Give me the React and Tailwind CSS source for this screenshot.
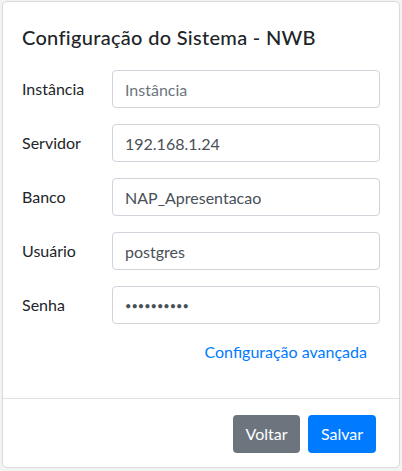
import { useState } from 'react';

const fields = [
  { id: 'instancia', label: 'Instância', value: '', placeholder: 'Instância' },
  { id: 'servidor', label: 'Servidor', value: '192.168.1.24' },
  { id: 'banco', label: 'Banco', value: 'NAP_Apresentacao' },
  { id: 'usuario', label: 'Usuário', value: 'postgres' },
  { id: 'senha', label: 'Senha', value: 'nwb1234567', type: 'password' },
];

export default function App() {
  const [values, setValues] = useState(
    Object.fromEntries(fields.map(f => [f.id, f.value]))
  );

  return (
    <div className="min-h-screen bg-[#f3f3f3] pl-[2px] pt-[1px] font-['Segoe_UI',Lato,sans-serif] leading-[1.5] text-[#212529]">
      <div className="w-[398px] h-[467px] bg-white border border-[#dadada] rounded-[5px] flex flex-col">
        <div className="px-[19px] pt-5 pb-[18px]">
          <h5 className="text-[20px] font-medium leading-[1.5] tracking-[0.3px]">Configuração do Sistema - NWB</h5>
        </div>

        <form className="px-[19px] flex-1 flex flex-col gap-4" onSubmit={e => e.preventDefault()}>
          {fields.map(f => (
            <div key={f.id} className="flex items-center">
              <label htmlFor={f.id} className="w-[90px] shrink-0 text-base">
                {f.label}
              </label>
              <input
                id={f.id}
                type={f.type || 'text'}
                value={values[f.id]}
                placeholder={f.placeholder}
                onChange={e => setValues(v => ({ ...v, [f.id]: e.target.value }))}
                className={`flex-1 h-[38px] px-3 text-[#495057] placeholder:text-[#6c757d] border border-[#ced4da] rounded-[4px] outline-none ${
                  f.type === 'password' ? 'text-[11px]' : 'text-base'
                }`}
              />
            </div>
          ))}
          <div className="flex justify-end pr-[13px]">
            <a href="#" className="text-[#007bff] text-base leading-6">
              Configuração avançada
            </a>
          </div>
        </form>

        <div className="border-t border-[#dee2e6] pt-4 pb-[14px] pr-[23px] flex justify-end gap-2">
          <button className="w-[67px] h-[38px] rounded-[4px] bg-[#6c757d] text-white text-base">
            Voltar
          </button>
          <button className="w-[68px] h-[38px] rounded-[4px] bg-[#007bff] text-white text-base">
            Salvar
          </button>
        </div>
      </div>
    </div>
  );
}
